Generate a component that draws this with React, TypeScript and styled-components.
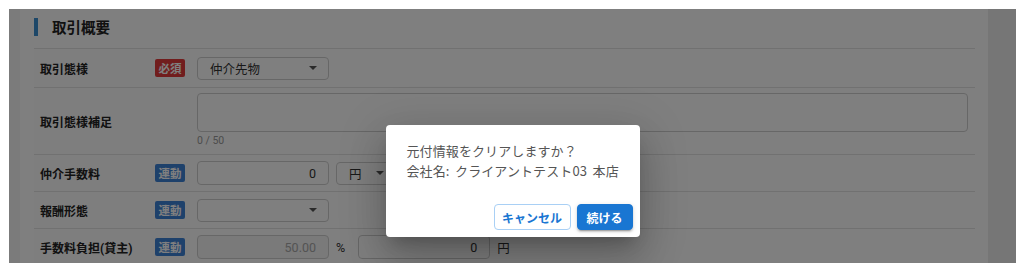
import styled, { createGlobalStyle } from "styled-components";

const GlobalStyle = createGlobalStyle`
  html, body {
    margin: 0;
    padding: 0;
    background: #ffffff;
  }
  body {
    font-family: Roboto, "Noto Sans CJK JP", sans-serif;
    color: #222;
  }
  * {
    box-sizing: border-box;
  }
`;

// Page frame

const Screen = styled.div`
  padding: 9px 8px 0 9px;
  height: 268px;
  overflow: hidden;
`;

const Frame = styled.div`
  position: relative;
  display: flex;
  height: 254px;
  overflow: hidden;
  background: #f6f6f6;
`;

const Main = styled.main`
  flex: 1;
  margin-left: 11px;
  padding: 0 13px 0 14px;
  background: #ffffff;
`;

const SideStrip = styled.div`
  width: 28px;
  background: #ececec;
`;

// Section

const SectionHeader = styled.div`
  display: flex;
  align-items: center;
  gap: 14px;
  height: 39px;
  padding-bottom: 4px;
`;

const TitleBar = styled.span`
  width: 4px;
  height: 18px;
  background: #3b8fd0;
`;

const SectionTitle = styled.h2`
  margin: 0;
  font-size: 14.5px;
  font-weight: 700;
  color: #222;
`;

const Table = styled.div`
  display: flex;
  flex-direction: column;
`;

const Row = styled.div<{ $height: number }>`
  display: grid;
  grid-template-columns: 156px 1fr;
  min-height: ${(p) => p.$height}px;
  border-top: 1px solid #e3e3e3;
`;

const LabelCell = styled.div`
  display: flex;
  align-items: center;
  justify-content: space-between;
  padding: 0 5px 0 6px;
  background: #fcfcfc;
`;

const Label = styled.span`
  font-size: 12px;
  font-weight: 700;
  color: #222;
`;

const Badge = styled.span<{ $tone: "required" | "linked" }>`
  display: inline-flex;
  align-items: center;
  justify-content: center;
  width: 30px;
  height: 18px;
  border-radius: 2px;
  font-size: 11.5px;
  font-weight: 700;
  color: #fff;
  background: ${(p) => (p.$tone === "required" ? "#e23b3b" : "#3d82d6")};
`;

const ValueCell = styled.div`
  display: flex;
  align-items: center;
  gap: 7px;
  padding: 0 7px;
`;

const StackCell = styled.div`
  display: flex;
  flex-direction: column;
  padding: 5px 7px 0 7px;
`;

const Select = styled.div<{ $width: number }>`
  display: flex;
  align-items: center;
  justify-content: space-between;
  width: ${(p) => p.$width}px;
  height: 23px;
  padding: 0 11px 0 12px;
  border: 1px solid #cfcfcf;
  border-radius: 4px;
  background: #fff;
  font-size: 12.5px;
  color: #333;
`;

const Caret = styled.span`
  width: 0;
  height: 0;
  border-left: 4px solid transparent;
  border-right: 4px solid transparent;
  border-top: 4px solid #555;
`;

const NumberInput = styled.div<{ $disabled?: boolean }>`
  display: flex;
  align-items: center;
  justify-content: flex-end;
  width: 132px;
  height: 24px;
  padding: 0 12px;
  border: 1px solid #cfcfcf;
  border-radius: 4px;
  background: ${(p) => (p.$disabled ? "#f4f4f4" : "#fff")};
  font-size: 12.5px;
  color: ${(p) => (p.$disabled ? "#a8a8a8" : "#333")};
`;

const Unit = styled.span`
  font-size: 12.5px;
  color: #333;
  padding: 0 6px 0 0;
`;

const TextArea = styled.div`
  height: 39px;
  border: 1px solid #cfcfcf;
  border-radius: 4px;
  background: #fff;
`;

const Counter = styled.span`
  margin-top: 3px;
  font-size: 10.5px;
  line-height: 12px;
  color: #999;
`;

// Modal

const Backdrop = styled.div`
  position: absolute;
  inset: 0;
  display: flex;
  justify-content: center;
  align-items: flex-start;
  padding-top: 116px;
  background: rgba(0, 0, 0, 0.5);
`;

const Dialog = styled.div`
  width: 254px;
  height: 112px;
  display: flex;
  flex-direction: column;
  justify-content: space-between;
  background: #fff;
  border-radius: 4px;
  box-shadow: 0 11px 15px -7px rgba(0, 0, 0, 0.2),
    0 24px 38px 3px rgba(0, 0, 0, 0.14), 0 9px 46px 8px rgba(0, 0, 0, 0.12);
`;

const DialogBody = styled.div`
  padding: 16px 10px 0 21px;
  font-family: "Noto Sans CJK JP", sans-serif;
  font-size: 13px;
  line-height: 20px;
  word-spacing: 2.5px;
  letter-spacing: 0.1px;
  color: #555;
  white-space: nowrap;
`;

const DialogActions = styled.div`
  display: flex;
  justify-content: flex-end;
  gap: 6px;
  padding: 0 7px 7px;
`;

const Button = styled.button<{ $primary?: boolean }>`
  width: ${(p) => (p.$primary ? "56px" : "77px")};
  height: 26px;
  padding: 0;
  border-radius: 4px;
  border: 1px solid ${(p) => (p.$primary ? "#1976d2" : "#a9d0f5")};
  background: ${(p) => (p.$primary ? "#1976d2" : "#fff")};
  color: ${(p) => (p.$primary ? "#fff" : "#1976d2")};
  font-family: Roboto, "Noto Sans CJK JP", sans-serif;
  font-size: 12px;
  font-weight: 700;
  box-shadow: ${(p) =>
    p.$primary
      ? "0 3px 1px -2px rgba(0,0,0,.2), 0 2px 2px 0 rgba(0,0,0,.14), 0 1px 5px 0 rgba(0,0,0,.12)"
      : "none"};
  cursor: pointer;
`;

export default function App() {
  return (
    <>
      <GlobalStyle />
      <Screen>
        <Frame>
          <Main>
            <SectionHeader>
              <TitleBar />
              <SectionTitle>取引概要</SectionTitle>
            </SectionHeader>
            <Table>
              <Row $height={39}>
                <LabelCell>
                  <Label>取引態様</Label>
                  <Badge $tone="required">必須</Badge>
                </LabelCell>
                <ValueCell>
                  <Select $width={132}>
                    仲介先物
                    <Caret />
                  </Select>
                </ValueCell>
              </Row>
              <Row $height={67}>
                <LabelCell>
                  <Label>取引態様補足</Label>
                </LabelCell>
                <StackCell>
                  <TextArea />
                  <Counter>0 / 50</Counter>
                </StackCell>
              </Row>
              <Row $height={37}>
                <LabelCell>
                  <Label>仲介手数料</Label>
                  <Badge $tone="linked">連動</Badge>
                </LabelCell>
                <ValueCell>
                  <NumberInput>0</NumberInput>
                  <Select $width={60}>
                    円
                    <Caret />
                  </Select>
                </ValueCell>
              </Row>
              <Row $height={37}>
                <LabelCell>
                  <Label>報酬形態</Label>
                  <Badge $tone="linked">連動</Badge>
                </LabelCell>
                <ValueCell>
                  <Select $width={132}>
                    <span />
                    <Caret />
                  </Select>
                </ValueCell>
              </Row>
              <Row $height={37}>
                <LabelCell>
                  <Label>手数料負担(貸主)</Label>
                  <Badge $tone="linked">連動</Badge>
                </LabelCell>
                <ValueCell>
                  <NumberInput $disabled>50.00</NumberInput>
                  <Unit>%</Unit>
                  <NumberInput>0</NumberInput>
                  <Unit>円</Unit>
                </ValueCell>
              </Row>
            </Table>
          </Main>
          <SideStrip />
          <Backdrop>
            <Dialog>
              <DialogBody>
                元付情報をクリアしますか？
                <br />
                会社名: クライアントテスト03 本店
              </DialogBody>
              <DialogActions>
                <Button>キャンセル</Button>
                <Button $primary>続ける</Button>
              </DialogActions>
            </Dialog>
          </Backdrop>
        </Frame>
      </Screen>
    </>
  );
}
